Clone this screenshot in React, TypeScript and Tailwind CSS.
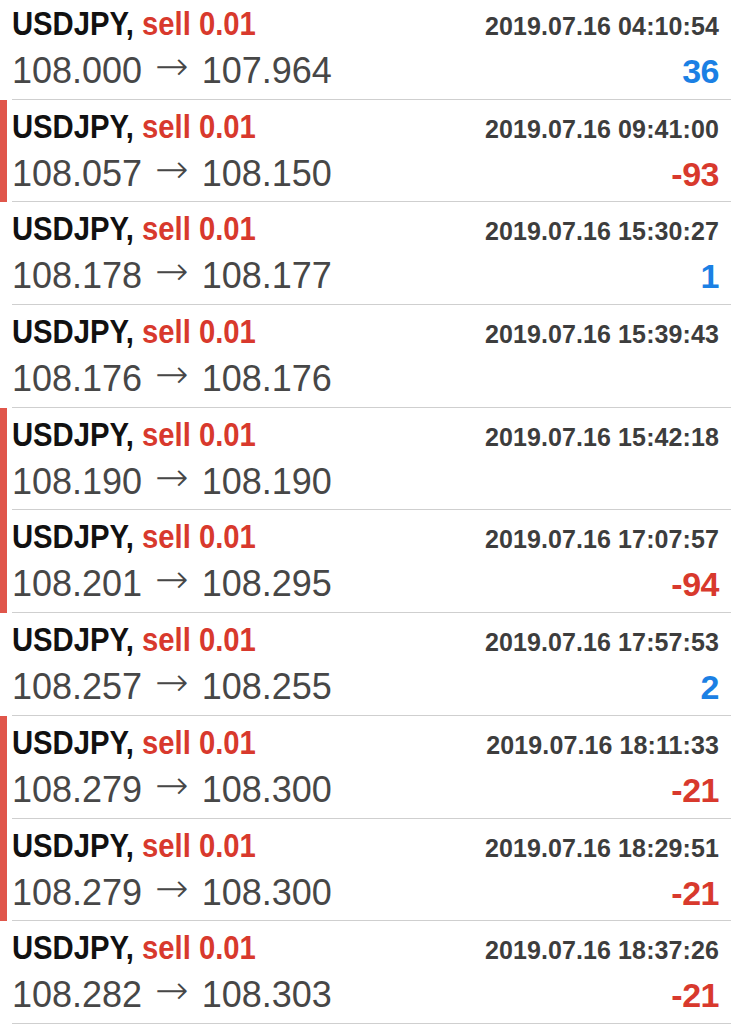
import React from 'react';

type Trade = {
  open: string;
  close: string;
  time: string;
  profit: number | null;
  flagged: boolean;
};

const TRADES: Trade[] = [
  { open: '108.000', close: '107.964', time: '2019.07.16 04:10:54', profit: 36, flagged: false },
  { open: '108.057', close: '108.150', time: '2019.07.16 09:41:00', profit: -93, flagged: true },
  { open: '108.178', close: '108.177', time: '2019.07.16 15:30:27', profit: 1, flagged: false },
  { open: '108.176', close: '108.176', time: '2019.07.16 15:39:43', profit: null, flagged: false },
  { open: '108.190', close: '108.190', time: '2019.07.16 15:42:18', profit: null, flagged: true },
  { open: '108.201', close: '108.295', time: '2019.07.16 17:07:57', profit: -94, flagged: true },
  { open: '108.257', close: '108.255', time: '2019.07.16 17:57:53', profit: 2, flagged: false },
  { open: '108.279', close: '108.300', time: '2019.07.16 18:11:33', profit: -21, flagged: true },
  { open: '108.279', close: '108.300', time: '2019.07.16 18:29:51', profit: -21, flagged: true },
  { open: '108.282', close: '108.303', time: '2019.07.16 18:37:26', profit: -21, flagged: false },
];

function TradeRow({ trade }: { trade: Trade }) {
  return (
    <div className="flex h-[102.7px]">
      {/* loss marker */}
      <div className={trade.flagged ? 'w-[7px] shrink-0 bg-[#e0564b]' : 'w-[7px] shrink-0'} />
      <div className="ml-[5px] flex-1 border-b border-[#cfcfcf] pr-3 pt-[9px] font-['Liberation_Sans',Arial,sans-serif]">
        <div className="flex items-baseline justify-between">
          {/* condensed headline */}
          <span className="inline-block origin-left scale-x-[0.86] whitespace-nowrap text-[34px] font-bold leading-none">
            <span className="text-[#111]">USDJPY, </span>
            <span className="text-[#d8392d]">sell 0.01</span>
          </span>
          <span className="text-[25px] font-bold leading-none tracking-[0.1px] text-[#3d3d3d]">
            {trade.time}
          </span>
        </div>
        <div className="mt-[13px] flex items-baseline justify-between">
          <span className="whitespace-nowrap text-[36px] leading-none text-[#474747]">
            {trade.open}{' '}
            <span className="mx-[3px] inline-block -translate-y-[3px] font-['DejaVu_Sans',sans-serif] text-[40px] font-extralight leading-[32px]">
              →
            </span>
            {' '}{trade.close}
          </span>
          {trade.profit !== null && (
            <span
              className={
                trade.profit < 0
                  ? 'text-[34px] font-bold leading-none tracking-[-0.5px] text-[#d8392d]'
                  : 'text-[34px] font-bold leading-none tracking-[-0.5px] text-[#1b80e4]'
              }
            >
              {trade.profit}
            </span>
          )}
        </div>
      </div>
    </div>
  );
}

export default function App() {
  return (
    <div className="h-[1024px] w-[731px] overflow-hidden bg-white">
      <div className="-mt-[3px]">
        {TRADES.map((t) => (
          <TradeRow key={t.time} trade={t} />
        ))}
      </div>
    </div>
  );
}
